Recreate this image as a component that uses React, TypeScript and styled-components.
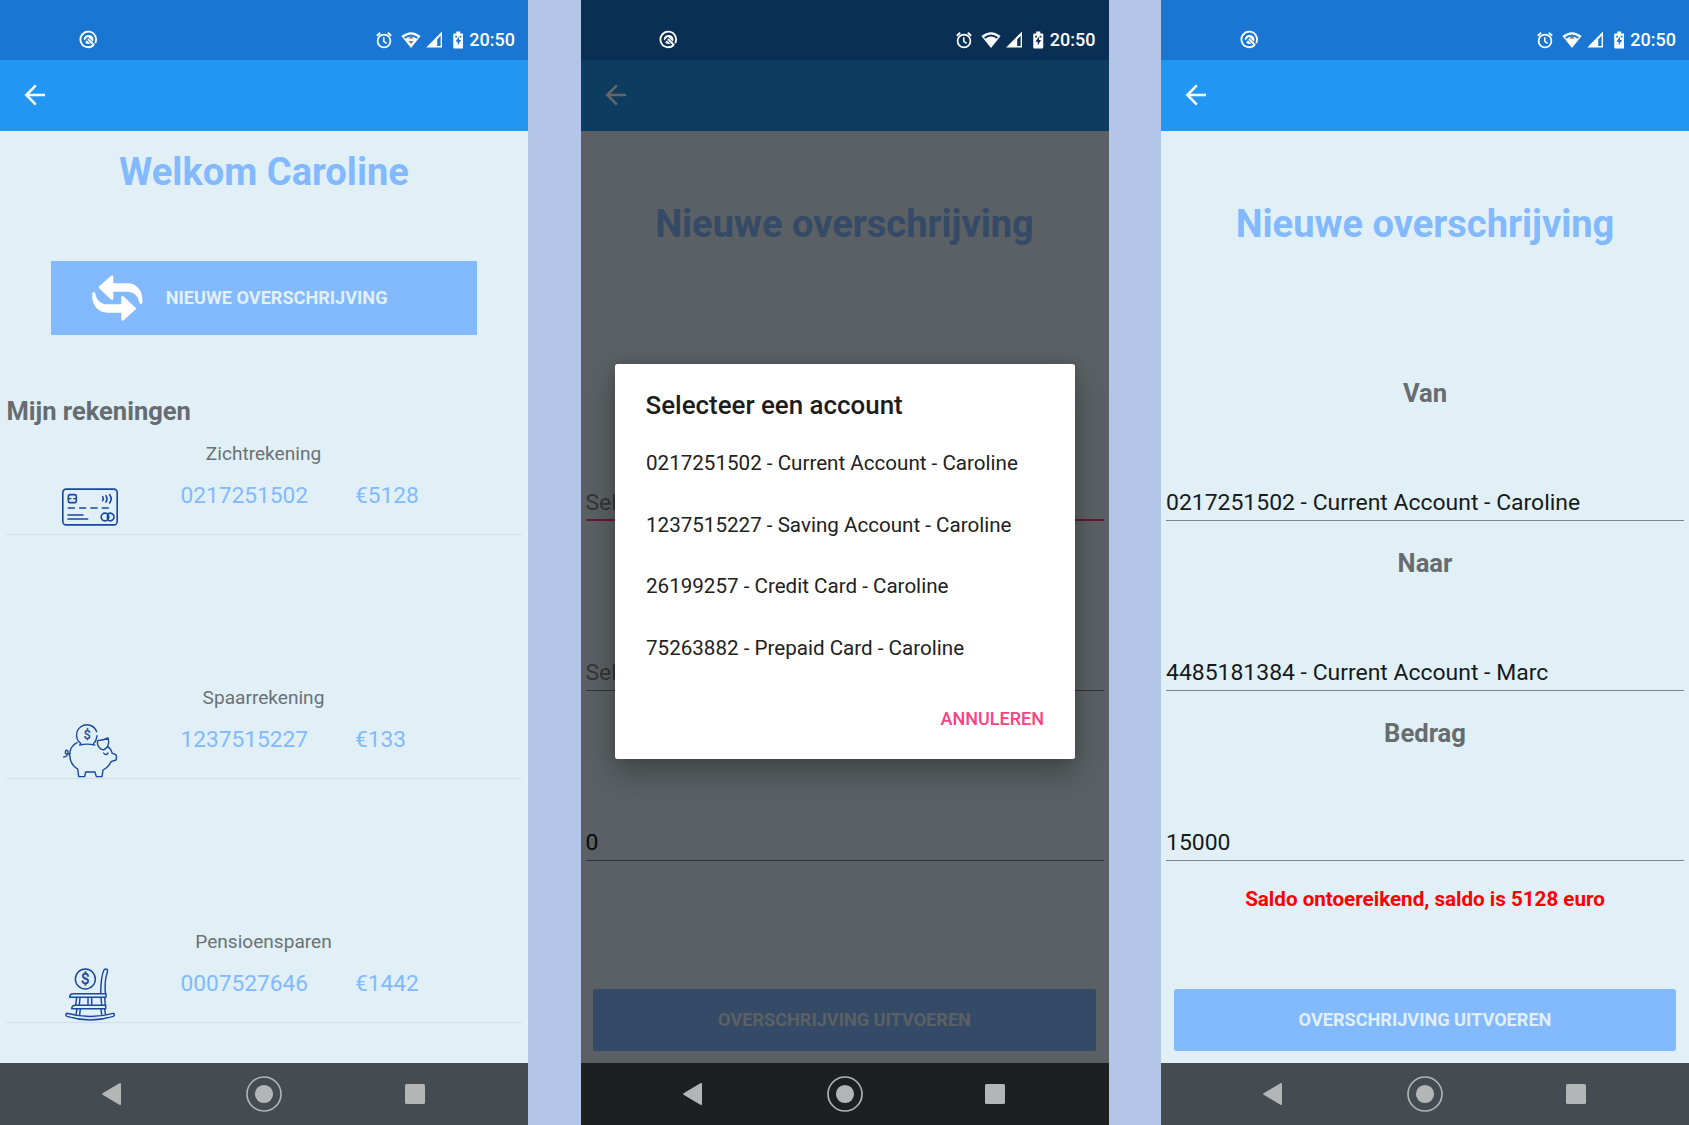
import React from 'react';
import styled, { createGlobalStyle } from 'styled-components';

const GlobalStyle = createGlobalStyle`
  * { box-sizing: border-box; }
  body {
    margin: 0;
    background: #b3c6e7;
    font-family: Roboto, "Liberation Sans", sans-serif;
    overflow: hidden;
  }
  svg { display: block; flex: none; }
`;

const Board = styled.main`
  display: grid;
  grid-template-columns: 528px 528px 528px;
  justify-content: space-between;
  width: 1689px;
  height: 1125px;
`;

const Phone = styled.section`
  position: relative;
  display: flex;
  flex-direction: column;
  height: 1125px;
  background: #e1f0f7;
`;

const StatusBar = styled.header<{ $dim?: boolean }>`
  position: relative;
  z-index: 2;
  display: flex;
  flex: none;
  align-items: flex-start;
  height: 59.8px;
  padding: 29px 13px 0 78.8px;
  background: ${(p) => (p.$dim ? '#0a2f54' : '#1976d2')};
  color: #fff;
`;

const StatusIcons = styled.div`
  display: flex;
  align-items: center;
  margin-left: auto;
  height: 21px;
`;

const StatusGlyph = styled.svg<{ $gap?: number }>`
  margin-left: ${(p) => p.$gap ?? 0}px;
`;

const Clock = styled.span`
  margin-left: 6px;
  font-size: 18px;
  font-weight: 500;
  line-height: 21px;
`;

const AppBar = styled.div`
  display: flex;
  flex: none;
  align-items: center;
  height: 71.6px;
  padding: 0 0 1px 20px;
  background: #2196f3;
`;

const Body = styled.div`
  display: flex;
  flex-direction: column;
  flex: 1;
  min-height: 0;
`;

const Title = styled.h1<{ $top: number }>`
  margin: ${(p) => p.$top}px 0 0;
  font-size: 38.1px;
  font-weight: 700;
  line-height: 45px;
  text-align: center;
  color: #82b9ff;
`;

const TransferButton = styled.button`
  display: flex;
  flex: none;
  align-items: center;
  width: 425.5px;
  height: 74.4px;
  margin: 65.2px 0 0 51.3px;
  padding: 0 0 0 41px;
  border: 0;
  background: #82b9ff;
  color: #e1f0f7;
  font: 700 18.13px/21px Roboto, "Liberation Sans", sans-serif;
`;

const TransferLabel = styled.span`
  margin-left: 22.5px;
`;

const SectionTitle = styled.h2`
  margin: 61px 0 0 6.5px;
  font-size: 25.5px;
  font-weight: 700;
  line-height: 30px;
  color: #666c6f;
`;

const AccountList = styled.ul`
  margin: 0 6px;
  padding: 0;
  list-style: none;
`;

const AccountRow = styled.li`
  display: grid;
  grid-template-columns: 174.5px 1fr;
  height: 109.3px;
  padding-top: 16px;
  border-bottom: 1.3px solid #d2dfe6;

  &:not(:last-child) {
    margin-bottom: 134.5px;
  }
`;

const AccountIcon = styled.div`
  padding: 37px 0 0 55.5px;
`;

const AccountName = styled.div`
  width: 166px;
  font-size: 19.1px;
  line-height: 23px;
  text-align: center;
  color: #6b7174;
`;

const AccountInfo = styled.div`
  display: flex;
  flex-direction: column;
`;

const Figures = styled.div`
  display: flex;
  margin-top: 17px;
  font-size: 22.7px;
  line-height: 27px;
  color: #82b9ff;
`;

const AccountNumber = styled.span`
  width: 174.5px;
`;

const Field = styled.label<{ $top: number }>`
  display: flex;
  flex-direction: column;
  margin: ${(p) => p.$top}px 5px 0;
  height: 142.6px;
`;

const FieldName = styled.span`
  font-size: 25.6px;
  font-weight: 700;
  line-height: 30px;
  text-align: center;
  color: #666c6f;
`;

const FieldValue = styled.span<{ $active?: boolean; $hint?: boolean }>`
  display: flex;
  margin-top: auto;
  height: 31.6px;
  font-size: 22.95px;
  line-height: 27px;
  color: ${(p) => (p.$hint ? '#7d8588' : '#17191a')};
  border-bottom: ${(p) => (p.$active ? '2px solid #ff4081' : '1px solid #7d8589')};
`;

const ErrorText = styled.p`
  height: 24px;
  margin: 26.4px 0 0;
  font-size: 20.6px;
  font-weight: 700;
  line-height: 24px;
  text-align: center;
  color: #f00;
`;

const SubmitButton = styled.button`
  height: 62px;
  margin: auto 12.7px 12.8px;
  padding: 0;
  border: 0;
  border-radius: 2.5px;
  background: #82b9ff;
  color: #e1f0f7;
  font: 700 18.13px/21px Roboto, "Liberation Sans", sans-serif;
`;

const NavBar = styled.nav<{ $dim?: boolean }>`
  position: relative;
  z-index: 2;
  display: flex;
  flex: none;
  justify-content: space-between;
  align-items: center;
  height: 61.7px;
  padding: 0 103.5px 0 102px;
  background: ${(p) => (p.$dim ? '#1c2021' : '#454c51')};
`;

const HomeIcon = styled.svg`
  margin-left: 2px;
`;

const Scrim = styled.div`
  position: absolute;
  inset: 0;
  z-index: 1;
  display: flex;
  align-items: center;
  justify-content: center;
  padding-bottom: 3px;
  background: rgba(0, 0, 0, 0.6);
`;

const Dialog = styled.div`
  display: flex;
  flex-direction: column;
  width: 460px;
  height: 395px;
  padding: 26px 31px 0;
  border-radius: 2.5px;
  background: #fff;
  box-shadow: 0 14px 30px rgba(0, 0, 0, 0.28), 0 0 12px rgba(0, 0, 0, 0.12);
`;

const DialogTitle = styled.h2`
  margin: 0 0 13px;
  font-size: 25.9px;
  font-weight: 500;
  line-height: 30px;
  color: #1c1c1c;
`;

const DialogOption = styled.div`
  display: flex;
  align-items: center;
  height: 61.6px;
  padding-left: 0.5px;
  font-size: 20.6px;
  color: #212121;
`;

const DialogCancel = styled.button`
  align-self: flex-end;
  margin: 29px -0.5px 0 0;
  padding: 0;
  border: 0;
  background: none;
  color: #ff4081;
  font: 500 18px/21px Roboto, "Liberation Sans", sans-serif;
`;

const CoinText = styled.text`
  font-family: Roboto, "Liberation Sans", sans-serif;
  text-anchor: middle;
  fill: #1a47a0;
`;

const StatusHeader = ({ dim, activity }: { dim?: boolean; activity?: 'both' | 'up' }) => {
  const bg = dim ? '#0a2f54' : '#1976d2';
  return (
    <StatusBar $dim={dim}>
      <svg width="19" height="20" viewBox="0 0 20 20">
        <path d="M15.2 16.6A8.2 8.2 0 1 1 17 14.3" fill="none" stroke="#fff" strokeWidth="1.9" />
        <path d="M5 10A5.2 5.2 0 0 1 15.2 10Q15.2 11.6 14.6 13L10.6 8.6Q9.4 7.4 8.2 8.6L5.6 11.6Z" fill="#fff" />
        <path d="M9.4 9.8 16 16.8" stroke="#fff" strokeWidth="2" />
        <path d="M6.4 13.6 8.4 11.4 12 15Q8.8 16.2 6.4 13.6Z" fill="#fff" />
      </svg>
      <StatusIcons>
        <StatusGlyph width="16" height="18" viewBox="0 0 16 18" fill="none" stroke="#fff">
          <circle cx="8" cy="10" r="6.4" strokeWidth="1.7" />
          <path d="M.8 4.7 4.2 1.8M15.2 4.7 11.8 1.8" strokeWidth="1.8" />
          <path d="M7.8 6.3V10.4L10.6 12.4" strokeWidth="1.5" />
        </StatusGlyph>
        <StatusGlyph width="20" height="18" viewBox="0 0 20 18" $gap={9}>
          <path d="M.4 5Q10-2.6 19.6 5L10 17Z" fill="#fff" />
          <path d="M3 6.2Q10 .6 17 6.2L15.8 7.7Q10 3.3 4.2 7.7Z" fill={bg} />
          {activity && <path d="M7.2 7.6 10 4.2 12.8 7.6Z" fill="#777d82" />}
          {activity === 'both' && <path d="M7.4 10 10 13 12.6 10Z" fill="#777d82" />}
        </StatusGlyph>
        <StatusGlyph width="16" height="17" viewBox="0 0 16 17" $gap={5}>
          <path d="M16 .5V16.4H.2Z" fill="#fff" />
          <path d="M14.6 4.8V14.9H11.2V8.4Z" fill={bg} />
        </StatusGlyph>
        <StatusGlyph width="10.5" height="18" viewBox="0 0 10 18" $gap={11}>
          <path d="M3 .6H7V2.4H9Q10 2.4 10 3.4V16.4Q10 17.4 9 17.4H1Q0 17.4 0 16.4V3.4Q0 2.4 1 2.4H3Z" fill="#fff" />
          <path d="M5.8 5.4 2.2 10.8H4.5V14.4L7.8 9H5.8ZM2 4.8H3.8V6.4H2ZM6.4 4.8H8.2V6.4H6.4Z" fill={bg} />
        </StatusGlyph>
        <Clock>20:50</Clock>
      </StatusIcons>
    </StatusBar>
  );
};

const TopBar = () => (
  <AppBar>
    <svg width="30" height="30" viewBox="0 0 30 30" fill="none" stroke="#fff" strokeWidth="2.5">
      <path d="M25 15H6.8M15.8 5.4 6.3 15 15.8 24.6" />
    </svg>
  </AppBar>
);

const AndroidNav = ({ dim }: { dim?: boolean }) => (
  <NavBar $dim={dim}>
    <svg width="20" height="24" viewBox="0 0 20 24">
      <path d="M18.2 1.8V22.2L1 12Z" fill="#b2b6b6" stroke="#b2b6b6" strokeWidth="1.6" strokeLinejoin="round" />
    </svg>
    <HomeIcon width="38" height="38" viewBox="0 0 38 38">
      <circle cx="19" cy="19" r="17" fill="none" stroke="#b2b6b6" strokeWidth="1.6" />
      <circle cx="19" cy="19" r="9.1" fill="#b2b6b6" />
    </HomeIcon>
    <svg width="20" height="20" viewBox="0 0 20 20">
      <rect width="20" height="20" rx="1.6" fill="#b2b6b6" />
    </svg>
  </NavBar>
);

const arrow =
  'M7.3 11.2 19 .7Q21.3-.6 21.3 2V8.3H35C45 8.3 50.4 16 50.4 24.5V27.3Q50.3 29 48.9 29 47.6 29 47.2 27.3C46 20 41 16.7 35 16.7H21.3V23Q21.3 26 19 24.6L7.3 13.6Q6 12.4 7.3 11.2Z';

const SwapIcon = () => (
  <svg width="51" height="46" viewBox="0 0 51 46" fill="#fff">
    <path d={arrow} />
    <path d={arrow} transform="rotate(180 25.3 23)" />
  </svg>
);

const line = {
  width: 56,
  height: 56,
  fill: 'none',
  stroke: '#1a47a0',
  strokeWidth: 4.8,
  strokeLinecap: 'round' as const,
  strokeLinejoin: 'round' as const,
};

const CardIcon = () => (
  <svg {...line} viewBox="65 28 168 168">
    <rect x="67.4" y="58.4" width="163.2" height="107.2" rx="10" />
    <rect x="84" y="75" width="24" height="24" rx="6" />
    <path d="M84 87H92M100 87H108" strokeWidth="4" />
    <path d="M187 81Q191 87 187 93M197 78Q203 87 197 97M208 75Q217 87 208 100" />
    <path d="M84 115H102M118 115H136M152 115H170M186 115H204M83 136H128M83 148H142" />
    <circle cx="194" cy="142" r="11.5" />
    <path d="M204 132A11.5 11.5 0 1 1 204 152Q198 142 204 132" />
  </svg>
);

const PigIcon = () => (
  <svg {...line} strokeWidth={4.2} viewBox="65 40 168 168">
    <path d="M121 101A31 31 0 1 1 169 66M170 78Q168 94 160 101" />
    <CoinText x="141" y="89" fontSize="37" stroke="#1a47a0" strokeWidth="1">$</CoinText>
    <path d="M118 106Q140 101 163 106" />
    <path d="M110 99C96 106 88 120 88 136Q89 165 112 178L115 201H133L136 187H164L168 201H185L188 181Q205 172 212 156L227 151Q230 143 227 135L216 131Q213 119 203 111" />
    <path d="M172 93Q190 91 203 85Q208 100 200 113L191 120Q184 121 179 116Q169 107 172 93ZM190 130Q196 140 203 130" />
    <path d="M88 132Q76 137 75 128Q76 119 82 123Q85 129 80 138Q77 142 70 142" />
  </svg>
);

const ChairIcon = () => (
  <svg {...line} strokeWidth={4.4} viewBox="65 52 168 168">
    <circle cx="135" cy="88" r="30" />
    <CoinText x="135" y="104" fontSize="45" stroke="#1a47a0" strokeWidth="1.6">$</CoinText>
    <path d="M181 131Q182 78 191 61Q195 56 200 59Q203 62 201 68Q192 92 195 131" />
    <path d="M88 143Q88 132 99 132H197V143ZM94 177Q95 167 105 167H196V177Z" />
    <path d="M109 144 106 166M119 144 117 166M143 144V166M154 144V166M182 144 184 166M193 144 195 166M110 178 107 193M120 178 118 195M182 178 184 195M193 178 195 193" />
    <path d="M79 191Q150 210 219 191Q226 194 219 200Q150 222 80 200Q73 195 79 191Z" />
  </svg>
);

const accounts = [
  { name: 'Zichtrekening', number: '0217251502', amount: '€5128', icon: <CardIcon /> },
  { name: 'Spaarrekening', number: '1237515227', amount: '€133', icon: <PigIcon /> },
  { name: 'Pensioensparen', number: '0007527646', amount: '€1442', icon: <ChairIcon /> },
];

const options = [
  '0217251502 - Current Account - Caroline',
  '1237515227 - Saving Account - Caroline',
  '26199257 - Credit Card - Caroline',
  '75263882 - Prepaid Card - Caroline',
];

type FormProps = { from?: string; to?: string; amount: string; error?: string; labels?: boolean };

const TransferForm = ({ from, to, amount, error, labels }: FormProps) => (
  <Body>
    <Title $top={70.2}>Nieuwe overschrijving</Title>
    <Field $top={131.8}>
      {labels && <FieldName>Van</FieldName>}
      <FieldValue $active={!from} $hint={!from}>{from ?? 'Selecteer een account'}</FieldValue>
    </Field>
    <Field $top={27.4}>
      {labels && <FieldName>Naar</FieldName>}
      <FieldValue $hint={!to}>{to ?? 'Selecteer een account'}</FieldValue>
    </Field>
    <Field $top={27.4}>
      {labels && <FieldName>Bedrag</FieldName>}
      <FieldValue>{amount}</FieldValue>
    </Field>
    <ErrorText>{error}</ErrorText>
    <SubmitButton>OVERSCHRIJVING UITVOEREN</SubmitButton>
  </Body>
);

export default function App() {
  return (
    <>
      <GlobalStyle />
      <Board>
        <Phone>
          <StatusHeader activity="both" />
          <TopBar />
          <Body>
            <Title $top={19}>Welkom Caroline</Title>
            <TransferButton>
              <SwapIcon />
              <TransferLabel>NIEUWE OVERSCHRIJVING</TransferLabel>
            </TransferButton>
            <SectionTitle>Mijn rekeningen</SectionTitle>
            <AccountList>
              {accounts.map((a) => (
                <AccountRow key={a.number}>
                  <AccountIcon>{a.icon}</AccountIcon>
                  <AccountInfo>
                    <AccountName>{a.name}</AccountName>
                    <Figures>
                      <AccountNumber>{a.number}</AccountNumber>
                      <span>{a.amount}</span>
                    </Figures>
                  </AccountInfo>
                </AccountRow>
              ))}
            </AccountList>
          </Body>
          <AndroidNav />
        </Phone>

        <Phone>
          <StatusHeader dim />
          <TopBar />
          <TransferForm amount="0" />
          <AndroidNav dim />
          <Scrim>
            <Dialog>
              <DialogTitle>Selecteer een account</DialogTitle>
              {options.map((o) => (
                <DialogOption key={o}>{o}</DialogOption>
              ))}
              <DialogCancel>ANNULEREN</DialogCancel>
            </Dialog>
          </Scrim>
        </Phone>

        <Phone>
          <StatusHeader activity="up" />
          <TopBar />
          <TransferForm
            labels
            from="0217251502 - Current Account - Caroline"
            to="4485181384 - Current Account - Marc"
            amount="15000"
            error="Saldo ontoereikend, saldo is 5128 euro"
          />
          <AndroidNav />
        </Phone>
      </Board>
    </>
  );
}
